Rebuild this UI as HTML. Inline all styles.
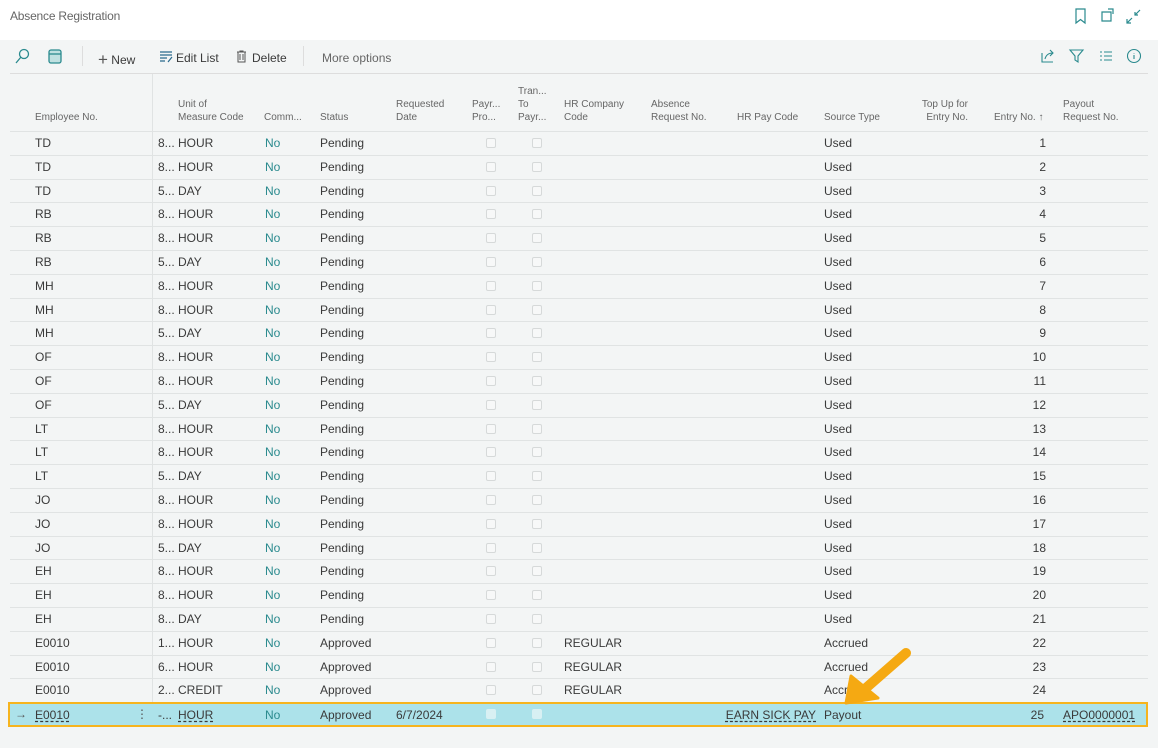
<!DOCTYPE html>
<html><head><meta charset="utf-8"><style>
*{margin:0;padding:0;box-sizing:border-box}
body{width:1158px;height:748px;background:#f3f5f5;font-family:"Liberation Sans",sans-serif;position:relative;overflow:hidden;color:#3a3a3a}
.top{position:absolute;left:0;top:0;width:1158px;height:40px;background:#fff}
.t{position:absolute;white-space:nowrap}
.h{font-size:10px;color:#666;line-height:13px}
.r{position:absolute;left:10px;width:1138px;height:24px;border-top:1px solid #e0e3e3;font-size:12px}
.r span{position:absolute;top:4px;white-space:nowrap}
.c1{left:25px}.c2{left:148px}.c3{left:168px}.c4{left:255px;color:#2a8a8e}.c5{left:310px}.c6{left:386px}
.c9{left:554px}.c11{left:814px}.c13{right:102px;text-align:right}.c14{left:1053px}.c10{right:330px}
.cb{position:absolute;top:6px;width:10px;height:10px;border:1px solid #d6d9d9;border-radius:2px;background:#f7f8f8}
.cb1{left:476px}.cb2{left:522px}
.sel{background:#ace2ea;border:2px solid #f6b41e;left:8px;width:1140px;height:25px}
.u{text-decoration:underline dashed;text-underline-offset:2px}
</style></head><body>
<div class="top"></div>
<div class="t" style="left:10px;top:9px;font-size:12px;color:#666;letter-spacing:-0.2px">Absence Registration</div>
<svg style="position:absolute;left:1070px;top:6px" width="80" height="20" fill="none" stroke="#2a8a8e" stroke-width="1.2">
<path d="M6 3h9v14l-4.5-3.5L6 17z"/><path d="M32 6h9v9H32zM38 3h5v5"/><path d="M57 17l5-5M57 13v4h4M70 4l-5 5M65 6v3h3"/></svg>
<svg style="position:absolute;left:14px;top:48px" width="50" height="18" fill="none" stroke="#2a8a8e" stroke-width="1.3">
<circle cx="10" cy="6" r="4.5"/><path d="M7 9l-5 6"/><rect x="35" y="2" width="12" height="13" rx="2" fill="#bfe0e0"/><path d="M35 6h12"/></svg>
<div style="position:absolute;left:82px;top:46px;width:1px;height:20px;background:#ddd"></div>
<div class="t" style="left:98px;top:49px;font-size:12px"><span style="font-size:17px;color:#555;position:relative;top:1px">+</span> New</div>
<svg style="position:absolute;left:159px;top:51px" width="14" height="12" fill="none" stroke="#2a6a8e" stroke-width="1.2"><path d="M1 1h12M1 4h12M1 7h7M1 10h5M9 11l4-5"/></svg>
<div class="t" style="left:176px;top:51px;font-size:12px">Edit List</div>
<svg style="position:absolute;left:236px;top:50px" width="11" height="13" fill="none" stroke="#555" stroke-width="1"><path d="M1 2h9M2 2v10h7V2M4 4v6M7 4v6M4 2V1h3v1"/></svg>
<div class="t" style="left:252px;top:51px;font-size:12px">Delete</div>
<div style="position:absolute;left:303px;top:46px;width:1px;height:20px;background:#ddd"></div>
<div class="t" style="left:322px;top:51px;font-size:12px;color:#666">More options</div>
<svg style="position:absolute;left:1040px;top:48px" width="105" height="16" fill="none" stroke="#2a8a8e" stroke-width="1.1">
<path d="M2 5v9h11M5 11c1-4 4-6 8-6M10 2l3 3-3 3"/><path d="M30 2h13l-5 6v6l-3-2V8z"/><path d="M60 4h2M64 4h8M60 8h2M64 8h8M60 12h2M64 12h8"/><circle cx="94" cy="8" r="6.5"/><path d="M94 7v4M94 5v0.5"/></svg>
<div style="position:absolute;left:10px;top:73px;width:1138px;height:1px;background:#ddd"></div>
<div style="position:absolute;left:152px;top:74px;width:1px;height:652px;background:#e0e3e3"></div>
<div class="t h" style="left:35px;top:111px">Employee No.</div>
<div class="t h" style="left:178px;top:98px">Unit of<br>Measure Code</div>
<div class="t h" style="left:264px;top:111px">Comm...</div>
<div class="t h" style="left:320px;top:111px">Status</div>
<div class="t h" style="left:396px;top:98px">Requested<br>Date</div>
<div class="t h" style="left:472px;top:98px">Payr...<br>Pro...</div>
<div class="t h" style="left:518px;top:85px">Tran...<br>To<br>Payr...</div>
<div class="t h" style="left:564px;top:98px">HR Company<br>Code</div>
<div class="t h" style="left:651px;top:98px">Absence<br>Request No.</div>
<div class="t h" style="left:737px;top:111px">HR Pay Code</div>
<div class="t h" style="left:824px;top:111px">Source Type</div>
<div class="t h" style="left:920px;top:98px;text-align:right;width:48px">Top Up for<br>Entry No.</div>
<div class="t h" style="left:994px;top:111px">Entry No. ↑</div>
<div class="t h" style="left:1063px;top:98px">Payout<br>Request No.</div>

<div class="r" style="top:131px"><span class="c1">TD</span><span class="c2">8...</span><span class="c3">HOUR</span><span class="c4">No</span><span class="c5">Pending</span><i class="cb cb1"></i><i class="cb cb2"></i><span class="c11">Used</span><span class="c13">1</span></div>
<div class="r" style="top:154.8px"><span class="c1">TD</span><span class="c2">8...</span><span class="c3">HOUR</span><span class="c4">No</span><span class="c5">Pending</span><i class="cb cb1"></i><i class="cb cb2"></i><span class="c11">Used</span><span class="c13">2</span></div>
<div class="r" style="top:178.6px"><span class="c1">TD</span><span class="c2">5...</span><span class="c3">DAY</span><span class="c4">No</span><span class="c5">Pending</span><i class="cb cb1"></i><i class="cb cb2"></i><span class="c11">Used</span><span class="c13">3</span></div>
<div class="r" style="top:202.4px"><span class="c1">RB</span><span class="c2">8...</span><span class="c3">HOUR</span><span class="c4">No</span><span class="c5">Pending</span><i class="cb cb1"></i><i class="cb cb2"></i><span class="c11">Used</span><span class="c13">4</span></div>
<div class="r" style="top:226.2px"><span class="c1">RB</span><span class="c2">8...</span><span class="c3">HOUR</span><span class="c4">No</span><span class="c5">Pending</span><i class="cb cb1"></i><i class="cb cb2"></i><span class="c11">Used</span><span class="c13">5</span></div>
<div class="r" style="top:250px"><span class="c1">RB</span><span class="c2">5...</span><span class="c3">DAY</span><span class="c4">No</span><span class="c5">Pending</span><i class="cb cb1"></i><i class="cb cb2"></i><span class="c11">Used</span><span class="c13">6</span></div>
<div class="r" style="top:273.8px"><span class="c1">MH</span><span class="c2">8...</span><span class="c3">HOUR</span><span class="c4">No</span><span class="c5">Pending</span><i class="cb cb1"></i><i class="cb cb2"></i><span class="c11">Used</span><span class="c13">7</span></div>
<div class="r" style="top:297.6px"><span class="c1">MH</span><span class="c2">8...</span><span class="c3">HOUR</span><span class="c4">No</span><span class="c5">Pending</span><i class="cb cb1"></i><i class="cb cb2"></i><span class="c11">Used</span><span class="c13">8</span></div>
<div class="r" style="top:321.4px"><span class="c1">MH</span><span class="c2">5...</span><span class="c3">DAY</span><span class="c4">No</span><span class="c5">Pending</span><i class="cb cb1"></i><i class="cb cb2"></i><span class="c11">Used</span><span class="c13">9</span></div>
<div class="r" style="top:345.2px"><span class="c1">OF</span><span class="c2">8...</span><span class="c3">HOUR</span><span class="c4">No</span><span class="c5">Pending</span><i class="cb cb1"></i><i class="cb cb2"></i><span class="c11">Used</span><span class="c13">10</span></div>
<div class="r" style="top:369px"><span class="c1">OF</span><span class="c2">8...</span><span class="c3">HOUR</span><span class="c4">No</span><span class="c5">Pending</span><i class="cb cb1"></i><i class="cb cb2"></i><span class="c11">Used</span><span class="c13">11</span></div>
<div class="r" style="top:392.8px"><span class="c1">OF</span><span class="c2">5...</span><span class="c3">DAY</span><span class="c4">No</span><span class="c5">Pending</span><i class="cb cb1"></i><i class="cb cb2"></i><span class="c11">Used</span><span class="c13">12</span></div>
<div class="r" style="top:416.6px"><span class="c1">LT</span><span class="c2">8...</span><span class="c3">HOUR</span><span class="c4">No</span><span class="c5">Pending</span><i class="cb cb1"></i><i class="cb cb2"></i><span class="c11">Used</span><span class="c13">13</span></div>
<div class="r" style="top:440.4px"><span class="c1">LT</span><span class="c2">8...</span><span class="c3">HOUR</span><span class="c4">No</span><span class="c5">Pending</span><i class="cb cb1"></i><i class="cb cb2"></i><span class="c11">Used</span><span class="c13">14</span></div>
<div class="r" style="top:464.2px"><span class="c1">LT</span><span class="c2">5...</span><span class="c3">DAY</span><span class="c4">No</span><span class="c5">Pending</span><i class="cb cb1"></i><i class="cb cb2"></i><span class="c11">Used</span><span class="c13">15</span></div>
<div class="r" style="top:488px"><span class="c1">JO</span><span class="c2">8...</span><span class="c3">HOUR</span><span class="c4">No</span><span class="c5">Pending</span><i class="cb cb1"></i><i class="cb cb2"></i><span class="c11">Used</span><span class="c13">16</span></div>
<div class="r" style="top:511.8px"><span class="c1">JO</span><span class="c2">8...</span><span class="c3">HOUR</span><span class="c4">No</span><span class="c5">Pending</span><i class="cb cb1"></i><i class="cb cb2"></i><span class="c11">Used</span><span class="c13">17</span></div>
<div class="r" style="top:535.6px"><span class="c1">JO</span><span class="c2">5...</span><span class="c3">DAY</span><span class="c4">No</span><span class="c5">Pending</span><i class="cb cb1"></i><i class="cb cb2"></i><span class="c11">Used</span><span class="c13">18</span></div>
<div class="r" style="top:559.4px"><span class="c1">EH</span><span class="c2">8...</span><span class="c3">HOUR</span><span class="c4">No</span><span class="c5">Pending</span><i class="cb cb1"></i><i class="cb cb2"></i><span class="c11">Used</span><span class="c13">19</span></div>
<div class="r" style="top:583.2px"><span class="c1">EH</span><span class="c2">8...</span><span class="c3">HOUR</span><span class="c4">No</span><span class="c5">Pending</span><i class="cb cb1"></i><i class="cb cb2"></i><span class="c11">Used</span><span class="c13">20</span></div>
<div class="r" style="top:607px"><span class="c1">EH</span><span class="c2">8...</span><span class="c3">DAY</span><span class="c4">No</span><span class="c5">Pending</span><i class="cb cb1"></i><i class="cb cb2"></i><span class="c11">Used</span><span class="c13">21</span></div>
<div class="r" style="top:630.8px"><span class="c1">E0010</span><span class="c2">1...</span><span class="c3">HOUR</span><span class="c4">No</span><span class="c5">Approved</span><i class="cb cb1"></i><i class="cb cb2"></i><span class="c9">REGULAR</span><span class="c11">Accrued</span><span class="c13">22</span></div>
<div class="r" style="top:654.6px"><span class="c1">E0010</span><span class="c2">6...</span><span class="c3">HOUR</span><span class="c4">No</span><span class="c5">Approved</span><i class="cb cb1"></i><i class="cb cb2"></i><span class="c9">REGULAR</span><span class="c11">Accrued</span><span class="c13">23</span></div>
<div class="r" style="top:678.4px"><span class="c1">E0010</span><span class="c2">2...</span><span class="c3">CREDIT</span><span class="c4">No</span><span class="c5">Approved</span><i class="cb cb1"></i><i class="cb cb2"></i><span class="c9">REGULAR</span><span class="c11">Accrued</span><span class="c13">24</span></div>
<div class="r sel" style="top:701.5px"><span style="left:5px;top:3px;color:#555">→</span><span class="c1 u" style="left:25px;top:4px">E0010</span><span style="left:126px;top:3px;color:#555">⋮</span><span class="c2" style="top:4px">-...</span><span class="c3 u" style="top:4px">HOUR</span><span class="c4" style="top:4px">No</span><span class="c5" style="top:4px">Approved</span><span class="c6" style="top:4px">6/7/2024</span><i class="cb cb1" style="top:5px;left:476px;background:#d8f0f3;border-color:#d8f0f3"></i><i class="cb cb2" style="top:5px;background:#d8f0f3;border-color:#d8f0f3"></i><span class="c10 u" style="top:4px;right:330px">EARN SICK PAY</span><span class="c11" style="top:4px">Payout</span><span class="c13" style="top:4px;right:102px">25</span><span class="c14 u" style="top:4px">APO0000001</span></div>
<svg style="position:absolute;left:0;top:0" width="1158" height="748"><path d="M906 653L866 688" stroke="#f5a912" stroke-width="10" stroke-linecap="round"/><path d="M846 703L851 676L878 698Z" fill="#f5a912" stroke="#f5a912" stroke-width="3" stroke-linejoin="round"/></svg>
</body></html>
